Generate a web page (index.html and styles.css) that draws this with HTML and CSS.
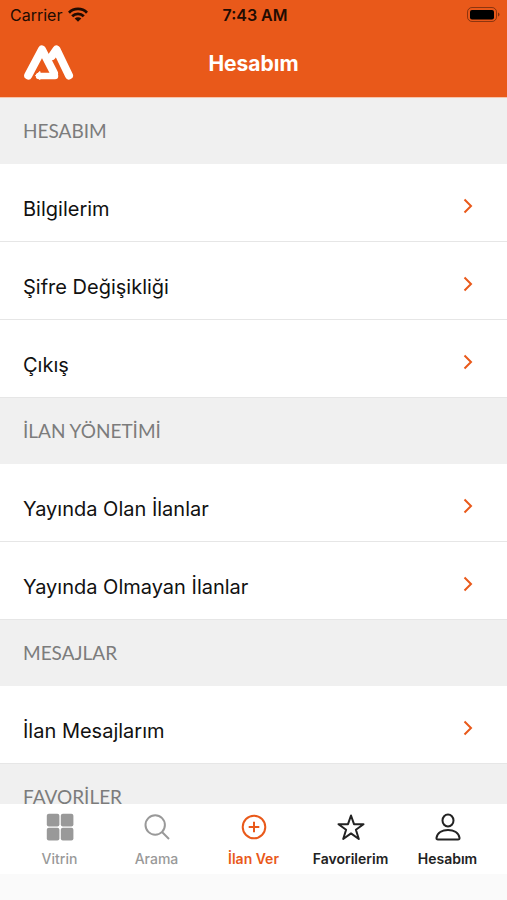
FILE: index.html
```html
<!doctype html>
<html lang="tr">
<head>
    <meta charset="utf-8">
    <meta name="viewport" content="width=device-width, initial-scale=1">
    <title>Hesabım</title>
    <link rel="stylesheet" href="styles.css">
</head>
<body>

<svg class="sprite" width="0" height="0" aria-hidden="true">
    <symbol id="chevron" viewBox="0 0 10 16">
        <path d="M1.5 1.5 8 8l-6.500 6.500" fill="none" stroke="currentColor" stroke-width="2"/>
    </symbol>
</svg>

<header class="header">
    <div class="status-bar">
        <div class="carrier">
            <span>Carrier</span>
            <svg width="20" height="15" viewBox="0 0 20 15" aria-hidden="true">
                <g fill="none" stroke="currentColor" stroke-width="2.800">
                    <path d="M1 5.700a12.700 12.700 0 0 1 18 0"/>
                    <path d="M4.200 9.200a8.200 8.200 0 0 1 11.600 0"/>
                </g>
                <path d="M10 14.700 6.700 11.500a4.700 4.700 0 0 1 6.600 0z" fill="currentColor"/>
            </svg>
        </div>
        <time class="time">7:43 AM</time>
        <svg class="battery" width="33" height="16" viewBox="0 0 33 16" aria-hidden="true">
            <rect x=".5" y=".5" width="29" height="14" rx="4.500" fill="none" stroke="#000" stroke-opacity=".4"/>
            <rect x="3" y="3" width="24" height="9.500" rx="2"/>
            <path d="M31 5.500q1.500.5 1.500 2t-1.500 2z" fill-opacity=".45"/>
        </svg>
    </div>
    <div class="nav-bar">
        <svg class="logo" width="50" height="36" viewBox="0 0 50 36" role="img" aria-label="Logo">
            <g fill="none" stroke="#fff" stroke-linecap="round" stroke-linejoin="round">
                <path d="M4.200 30.500 18 4.500 30 28" stroke-width="8"/>
                <path d="M31 31H15" stroke-width="6.500"/>
                <path d="M28 11 32.500 4.500 45 30.500" stroke-width="8"/>
            </g>
            <path d="M11.500 30.500 16 26.500v8z" fill="#fff" stroke="#fff" stroke-linejoin="round"/>
        </svg>
        <h1 class="page-title">Hesabım</h1>
    </div>
</header>

<main class="content">
    <h2 class="section-title">HESABIM</h2>
    <a class="row" href="#bilgilerim">Bilgilerim <svg class="chevron"><use href="#chevron"/></svg></a>
    <a class="row" href="#sifre">Şifre Değişikliği <svg class="chevron"><use href="#chevron"/></svg></a>
    <a class="row" href="#cikis">Çıkış <svg class="chevron"><use href="#chevron"/></svg></a>

    <h2 class="section-title">İLAN YÖNETİMİ</h2>
    <a class="row" href="#yayinda-olan">Yayında Olan İlanlar <svg class="chevron"><use href="#chevron"/></svg></a>
    <a class="row" href="#yayinda-olmayan">Yayında Olmayan İlanlar <svg class="chevron"><use href="#chevron"/></svg></a>

    <h2 class="section-title">MESAJLAR</h2>
    <a class="row" href="#mesajlar">İlan Mesajlarım <svg class="chevron"><use href="#chevron"/></svg></a>

    <h2 class="section-title">FAVORİLER</h2>
</main>

<nav class="tab-bar">
    <a class="tab muted" href="#vitrin">
        <svg class="tab-icon" viewBox="0 0 28 28" fill="currentColor">
            <rect x=".8" y=".8" width="12.600" height="12.600" rx="2"/>
            <rect x="14.800" y=".8" width="12.600" height="12.600" rx="2"/>
            <rect x=".8" y="14.800" width="12.600" height="12.600" rx="2"/>
            <rect x="14.800" y="14.800" width="12.600" height="12.600" rx="2"/>
        </svg>
        Vitrin
    </a>
    <a class="tab muted" href="#arama">
        <svg class="tab-icon" viewBox="0 0 28 28">
            <circle cx="12.200" cy="12" r="9.700"/>
            <path d="m19 19 7 7"/>
        </svg>
        Arama
    </a>
    <a class="tab accent" href="#ilan-ver">
        <svg class="tab-icon" viewBox="0 0 28 28">
            <circle cx="14" cy="14" r="11.300"/>
            <path d="M14 8.700v10.600M8.700 14h10.600"/>
        </svg>
        İlan Ver
    </a>
    <a class="tab" href="#favorilerim">
        <svg class="tab-icon" viewBox="0 0 28 28">
            <path d="m14 2.500 3 8.700h9.500l-7.600 5.600 2.900 9.200-7.800-5.600L6.200 26l2.900-9.200-7.600-5.600H11z" stroke-linejoin="round"/>
        </svg>
        Favorilerim
    </a>
    <a class="tab" href="#hesabim">
        <svg class="tab-icon" viewBox="0 0 28 28">
            <ellipse cx="14" cy="7.500" rx="5.500" ry="6"/>
            <path d="M4 26.500q-1.700 0-1.500-1.700C3.500 19.500 8.500 17 14 17s10.500 2.500 11.500 7.800q.2 1.700-1.500 1.700z"/>
        </svg>
        Hesabım
    </a>
</nav>

</body>
</html>
```

FILE: styles.css
```css
* {
    box-sizing: border-box;
}

body {
    display: flex;
    flex-direction: column;
    height: 100vh;
    margin: 0;
    background: #fff;
    color: #111;
    font-family: Inter, "Liberation Sans", sans-serif;
}

a {
    color: inherit;
    text-decoration: none;
}

.sprite {
    position: absolute;
}

.header {
    flex: none;
    background: #e9591a;
    border-bottom: 1px solid #f6c4ab;
}

.status-bar {
    display: grid;
    grid-template-columns: 1fr auto 1fr;
    align-items: center;
    height: 29px;
    padding: 0 7px 0 10px;
    color: #210b02;
    font-size: 16px;
}

.carrier {
    display: flex;
    align-items: center;
    gap: 6px;
}

.time {
    font-weight: 600;
}

.battery {
    justify-self: end;
}

.nav-bar {
    display: grid;
    grid-template-columns: 1fr auto 1fr;
    align-items: center;
    height: 68px;
    padding: 0 24px;
}

.page-title {
    margin: 0;
    color: #fff;
    font-size: 21px;
    font-weight: 700;
}

.content {
    flex: 1;
    min-height: 0;
    overflow-y: auto;
    scrollbar-width: none;
}

.section-title {
    margin: 0;
    padding: 21px 23px;
    background: #f0f0f0;
    color: #7c7c7c;
    font-family: Lato, "Open Sans", sans-serif;
    font-size: 19px;
    font-weight: 400;
    line-height: 24px;
}

.row {
    display: flex;
    justify-content: space-between;
    padding: 30px 34px 17px 23px;
    border-bottom: 1px solid #e6e6e6;
    font-size: 20px;
    line-height: 30px;
}

.chevron {
    width: 10px;
    height: 16px;
    margin-top: 4px;
    color: #e9591a;
}

.tab-bar {
    display: flex;
    flex: none;
    padding: 0 11px;
    background: #fff;
    border-bottom: 26px solid #fafafa;
}

.tab {
    display: flex;
    flex: 1;
    flex-direction: column;
    align-items: center;
    gap: 8px;
    padding: 9px 0 5px;
    color: #222;
    font-size: 14px;
    font-weight: 600;
    line-height: 20px;
}

.tab-icon {
    width: 28px;
    height: 28px;
    fill: none;
    stroke: currentColor;
    stroke-width: 2;
}

.tab-icon[fill] {
    fill: currentColor;
    stroke: none;
}

.muted {
    color: #999;
    font-weight: 500;
}

.accent {
    color: #e9591a;
}
```
